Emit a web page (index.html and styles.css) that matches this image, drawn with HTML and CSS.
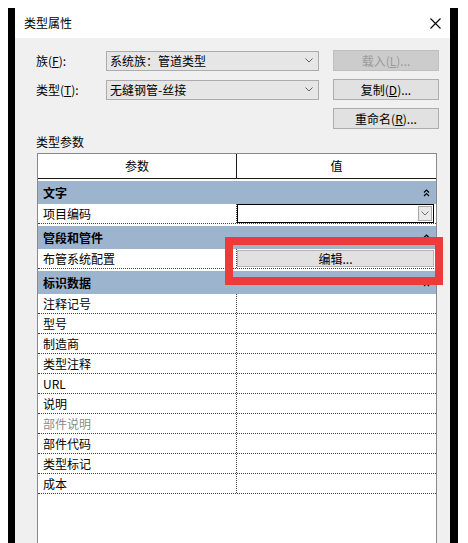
FILE: index.html
```html
<!DOCTYPE html>
<html lang="zh-CN">
<head>
<meta charset="utf-8">
<title>类型属性</title>
<link rel="stylesheet" href="styles.css">
</head>
<body>
<div class="frame">
  <div class="window">
    <div class="titlebar">
      <span class="title">类型属性</span>
      <svg class="close" width="11" height="11" viewBox="0 0 11 11"><path d="M0.5 0.5 L10.5 10.5 M10.5 0.5 L0.5 10.5" stroke="#000" stroke-width="1.1" fill="none"/></svg>
    </div>
    <div class="body">
      <div class="form">
        <span class="lbl">族(<u>F</u>):</span>
        <div class="select"><span>系统族：管道类型</span><svg class="chev" width="8" height="5" viewBox="0 0 8 5"><path d="M0.5 0.5 L4 4 L7.5 0.5" stroke="#606060" fill="none"/></svg></div>
        <div class="btn disabled">载入(<u>L</u>)...</div>
        <span class="lbl">类型(<u>T</u>):</span>
        <div class="select"><span>无缝钢管-丝接</span><svg class="chev" width="8" height="5" viewBox="0 0 8 5"><path d="M0.5 0.5 L4 4 L7.5 0.5" stroke="#606060" fill="none"/></svg></div>
        <div class="btn">复制(<u>D</u>)...</div>
        <span></span>
        <span></span>
        <div class="btn">重命名(<u>R</u>)...</div>
      </div>
      <div class="section-label">类型参数</div>
      <div class="table">
        <div class="thead">
          <div class="th">参数</div>
          <div class="th th-val">值</div>
        </div>
        <div class="group"><span>文字</span><svg class="collapse" width="7" height="8" viewBox="0 0 7 8"><path d="M1 3.5 L3.5 1 L6 3.5 M1 7 L3.5 4.5 L6 7" stroke="#000" stroke-width="1.2" fill="none"/></svg></div>
        <div class="row">
          <div class="k">项目编码</div>
          <div class="v"><div class="combo"><span class="combo-field"></span><span class="combo-btn"><svg width="8" height="5" viewBox="0 0 8 5"><path d="M0.5 0.5 L4 4 L7.5 0.5" stroke="#707070" fill="none"/></svg></span></div></div>
        </div>
        <div class="group"><span>管段和管件</span><svg class="collapse" width="7" height="8" viewBox="0 0 7 8"><path d="M1 3.5 L3.5 1 L6 3.5 M1 7 L3.5 4.5 L6 7" stroke="#000" stroke-width="1.2" fill="none"/></svg></div>
        <div class="row">
          <div class="k">布管系统配置</div>
          <div class="v"><div class="edit-btn">编辑...</div></div>
        </div>
        <div class="group"><span>标识数据</span><svg class="collapse" width="7" height="8" viewBox="0 0 7 8"><path d="M1 3.5 L3.5 1 L6 3.5 M1 7 L3.5 4.5 L6 7" stroke="#000" stroke-width="1.2" fill="none"/></svg></div>
        <div class="row"><div class="k">注释记号</div><div class="v"></div></div>
        <div class="row"><div class="k">型号</div><div class="v"></div></div>
        <div class="row"><div class="k">制造商</div><div class="v"></div></div>
        <div class="row"><div class="k">类型注释</div><div class="v"></div></div>
        <div class="row"><div class="k">URL</div><div class="v"></div></div>
        <div class="row"><div class="k">说明</div><div class="v"></div></div>
        <div class="row"><div class="k muted">部件说明</div><div class="v"></div></div>
        <div class="row"><div class="k">部件代码</div><div class="v"></div></div>
        <div class="row"><div class="k">类型标记</div><div class="v"></div></div>
        <div class="row"><div class="k">成本</div><div class="v"></div></div>
      </div>
    </div>
  </div>
</div>
<div class="highlight"></div>
</body>
</html>
```
FILE: styles.css
```css
* {
  box-sizing: border-box;
}

html, body {
  margin: 0;
  padding: 0;
  background: #ffffff;
}

body {
  width: 468px;
  height: 543px;
  overflow: hidden;
  position: relative;
  font-family: "Noto Sans CJK SC", "Noto Sans", "Liberation Sans", sans-serif;
  font-size: 12px;
  color: #000;
}

.frame {
  margin: 8px 0 0 8px;
  width: 450px;
  height: 535px;
  background: #000;
  padding: 0 8px 0 7px;
}

.window {
  height: 100%;
  display: flex;
  flex-direction: column;
  background: #f0f0f0;
}

.titlebar {
  height: 30px;
  flex: none;
  background: #ffffff;
  display: flex;
  align-items: center;
  justify-content: space-between;
  padding: 0 9px 0 9px;
}

.title {
  font-size: 12px;
  line-height: 16px;
}

.close {
  display: block;
}

.body {
  flex: 1;
  overflow: hidden;
  padding-top: 12px;
}

.form {
  display: grid;
  grid-template-columns: 56px 213px 106px;
  grid-auto-rows: 21px;
  column-gap: 14px;
  row-gap: 8px;
  padding-left: 21px;
  align-items: center;
}

.lbl {
  line-height: 16px;
  white-space: nowrap;
}

.select {
  height: 20px;
  background: #e6e6e6;
  border: 1px solid #acacac;
  display: flex;
  align-items: center;
  justify-content: space-between;
  padding: 0 5px 0 3px;
  line-height: 16px;
}

.chev {
  display: block;
}

.btn {
  height: 21px;
  background: #e1e1e1;
  border: 1px solid #adadad;
  display: flex;
  align-items: center;
  justify-content: center;
  line-height: 16px;
}

.btn.disabled {
  background: #cccccc;
  border-color: #bfbfbf;
  color: #9a9a9a;
}

.section-label {
  margin: 5px 0 0 21px;
  line-height: 16px;
  height: 16px;
}

.table {
  margin: 3px 0 0 22px;
  width: 400px;
  height: 420px;
  background: #ffffff;
  border: 1px solid #8a8a8a;
  border-bottom: none;
}

.thead {
  display: grid;
  grid-template-columns: 198px 1fr;
  height: 25px;
  border-bottom: 1px solid #1a1a1a;
}

.th {
  display: flex;
  align-items: center;
  justify-content: center;
  line-height: 16px;
}

.th-val {
  border-left: 1px solid #1a1a1a;
}

.group {
  margin-top: 2px;
  height: 23px;
  background: #9db4cf;
  display: flex;
  align-items: center;
  justify-content: space-between;
  padding: 0 6px 0 5px;
  font-weight: bold;
  line-height: 16px;
}

.collapse {
  display: block;
}

.row {
  display: grid;
  grid-template-columns: 198px 1fr;
  height: 20px;
  border-bottom: 1px dotted #404040;
}

.k {
  padding-left: 5px;
  line-height: 19px;
  white-space: nowrap;
}

.k.muted {
  color: #8c8c8c;
}

.v {
  border-left: 1px dotted #404040;
  display: flex;
  align-items: stretch;
  padding: 0 2px 0 0;
}

.combo {
  flex: 1;
  display: flex;
  border: 1px solid #000;
  background: #fff;
  padding: 1px;
}

.combo-field {
  flex: 1;
}

.combo-btn {
  width: 14px;
  background: #e9e9e9;
  border: 1px solid #a8a8a8;
  display: flex;
  align-items: center;
  justify-content: center;
}

.combo-btn svg {
  display: block;
}

.edit-btn {
  flex: 1;
  margin: 1px 0 1px 0;
  background: #e1e1e1;
  border: 1px solid #b4b4b4;
  display: flex;
  align-items: center;
  justify-content: center;
  line-height: 14px;
  font-size: 12px;
}

.highlight {
  position: absolute;
  left: 225px;
  top: 237px;
  width: 218px;
  height: 48px;
  border: 8px solid #ef3a3a;
}
```
